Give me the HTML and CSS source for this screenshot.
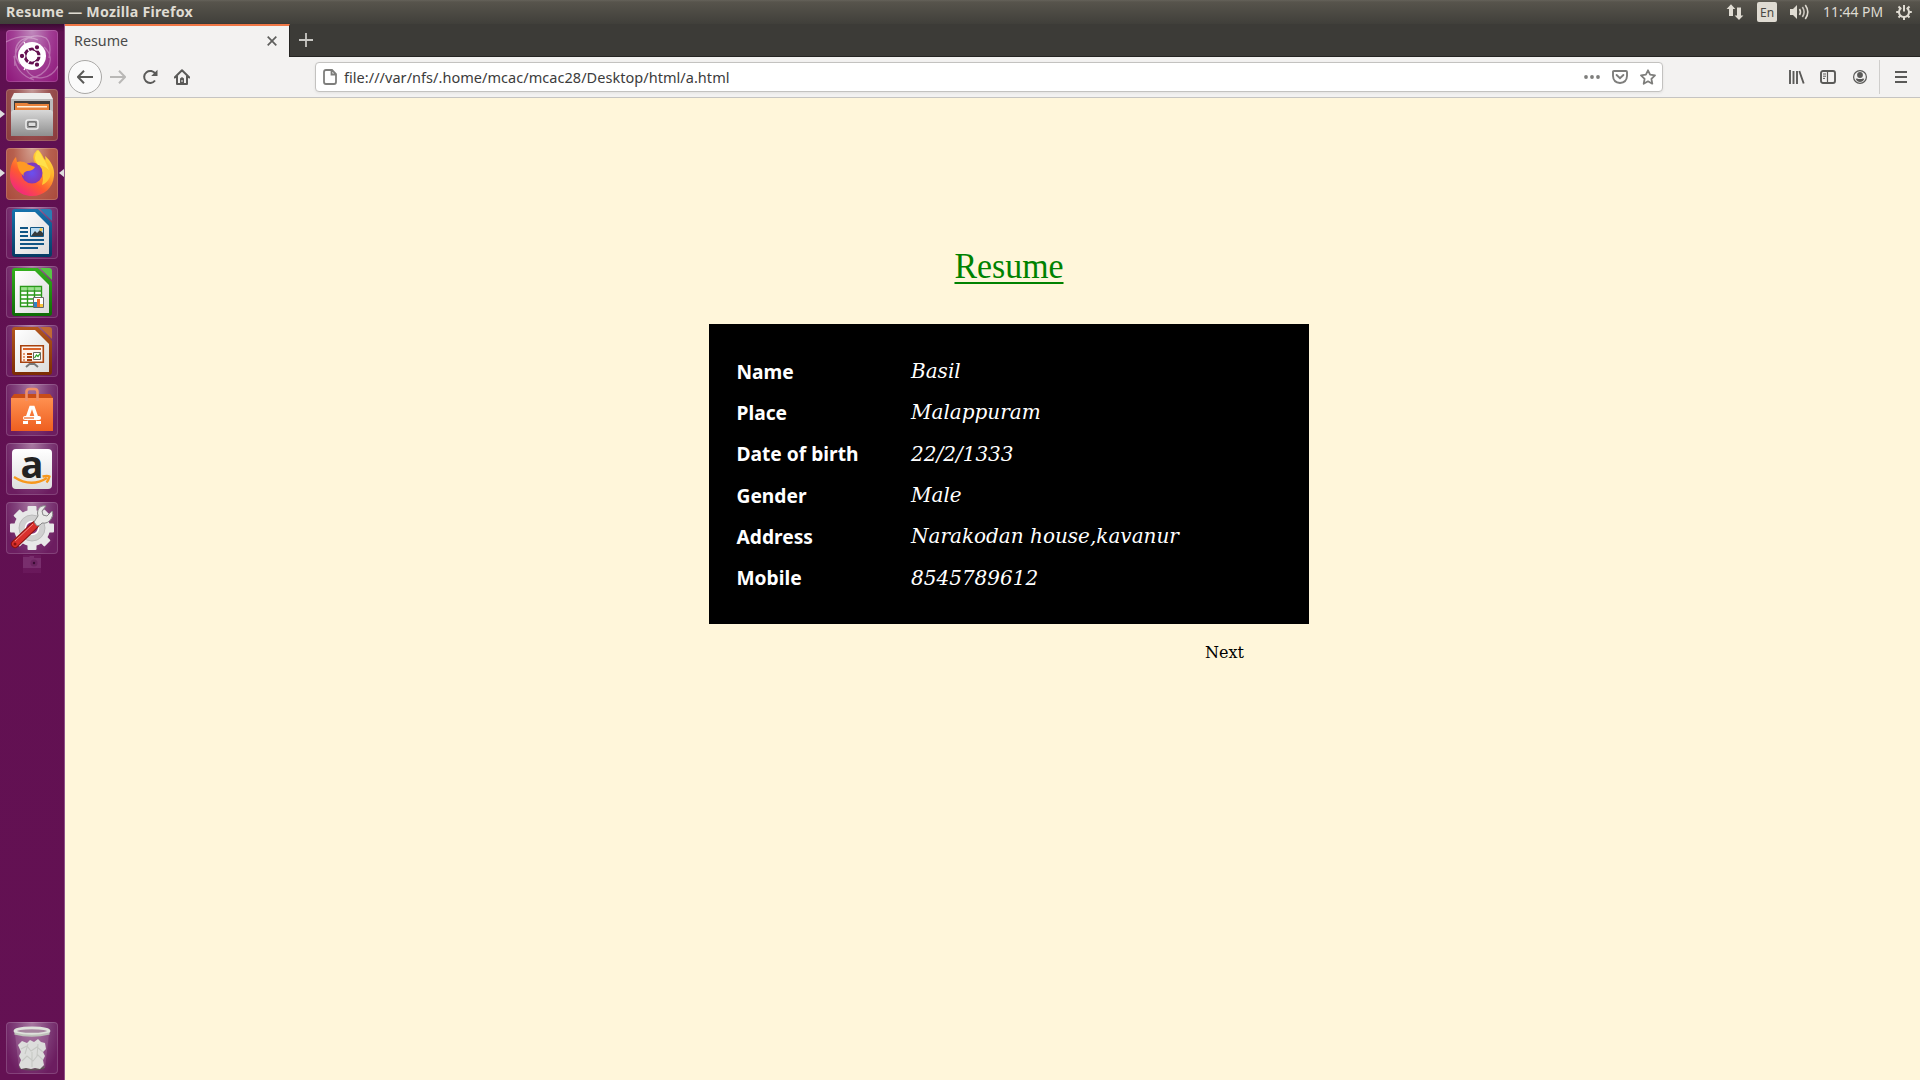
FILE: index.html
```
<!DOCTYPE html>
<html lang="en">
<head>
<meta charset="utf-8">
<title>Resume</title>
<link rel="stylesheet" href="styles.css">
</head>
<body>
<svg width="0" height="0" class="defs" aria-hidden="true">
  <defs>
    <linearGradient id="orange" x1="0" y1="0" x2="0" y2="1"><stop offset="0" stop-color="#ff9050"/><stop offset="1" stop-color="#ee5f20"/></linearGradient>
    <linearGradient id="metal" x1="0" y1="0" x2="0" y2="1"><stop offset="0" stop-color="#d8d8d8"/><stop offset="1" stop-color="#8f8f8f"/></linearGradient>
    <linearGradient id="paper" x1="0" y1="0" x2="1" y2="1"><stop offset="0" stop-color="#ffffff"/><stop offset="1" stop-color="#dcdcdc"/></linearGradient>
    <linearGradient id="fox" x1=".9" y1="0" x2=".2" y2="1"><stop offset="0" stop-color="#fff04a"/><stop offset=".35" stop-color="#ffb02a"/><stop offset=".65" stop-color="#ff5a30"/><stop offset="1" stop-color="#f0208a"/></linearGradient>
    <radialGradient id="globe"><stop offset="0" stop-color="#6a50f0"/><stop offset="1" stop-color="#8038b8"/></radialGradient>
    <linearGradient id="writer" x1="0" y1="0" x2="0" y2="1"><stop offset="0" stop-color="#1673ae"/><stop offset="1" stop-color="#063a63"/></linearGradient>
    <linearGradient id="calc" x1="0" y1="0" x2="0" y2="1"><stop offset="0" stop-color="#35b01e"/><stop offset="1" stop-color="#0e6a06"/></linearGradient>
    <linearGradient id="impress" x1="0" y1="0" x2="0" y2="1"><stop offset="0" stop-color="#b3561d"/><stop offset="1" stop-color="#7b2c04"/></linearGradient>
  </defs>
</svg>

<header class="panel">
  <span class="panel-title">Resume — Mozilla Firefox</span>
  <div class="indicators">
    <svg width="18" height="18" viewBox="0 0 18 18"><path fill="#dfdbd2" d="M5 1.3 9.3 6H7v7H3V6H.6zM13 17 8.6 12.4H11v-8h4v8h2.4z"/></svg>
    <span class="lang">En</span>
    <svg class="sound" width="20" height="18" viewBox="0 0 20 18"><path fill="#dfdbd2" d="M0 6h3l4-4v14l-4-4H0z"/><g fill="none" stroke="#dfdbd2" stroke-width="1.6"><path d="M9.5 6q2 3 0 6"/><path d="M12.4 4q3.4 5 0 10" opacity=".85"/><path d="M15.3 2q5 7 0 14"/></g></svg>
    <span class="clock">11:44 PM</span>
    <svg width="16" height="16" viewBox="0 0 16 16"><g fill="none" stroke="#dfdbd2"><path stroke-width="2" d="M5.3 3.8a5 5 0 1 0 5.4 0M8 1v6.5"/><path stroke-width="2" d="M.2 8H3m10 0h2.800M8 13v3M2.500 2.500l2 2m9-2-2 2M2.500 13.500l2-2m9 2-2-2"/></g></svg>
  </div>
</header>

<main class="desktop">
  <nav class="launcher">
    <div class="tile dash">
      <svg viewBox="0 0 52 52"><g fill="none" stroke="#fff" opacity=".3" stroke-width="1.300"><path d="M14 34C2 18 16 2 32 10M38 17c14 12 2 30-14 31M20 39C28 54 46 48 52 36M9 36C6 16 24 0 40 8q6 6 3 20M0 12Q12 5 26 7M8 26q2 18 20 24"/></g><circle cx="26" cy="26" r="14" fill="#fff"/><circle cx="26" cy="26" r="7" fill="none" stroke="#641050" stroke-width="3.200"/><g stroke="#fff" stroke-width="1.300" fill="#641050"><path d="M26 26 18 12M26 26h14M26 26 18 40"/><circle cx="16" cy="26" r="2.800"/><circle cx="31" cy="17.300" r="2.800"/><circle cx="31" cy="34.700" r="2.800"/></g><circle cx="26" cy="26" r="5.400" fill="#fff"/></svg>
    </div>
    <div class="tile brick running">
      <svg viewBox="0 0 52 52"><path fill="#ededed" d="M8 4h36l3 6v10H5V10z"/><path fill="#bbb" d="M5 10h42v37H5z"/><path fill="#403b38" d="M8 12h36v9H8z"/><path fill="#e8823a" d="M9 14h12l2 1h20v7H9z"/><path fill="#fff1dc" d="M11 17h30v1.500H11z"/><path fill="url(#metal)" d="M7 21h38l2 2v24H5V23z"/><rect x="20" y="31" width="12" height="9" rx="2" fill="#9a9a9a" stroke="#eee" stroke-width="1.500"/><rect x="22" y="33" width="8" height="4.500" rx="1" fill="#ddd" stroke="#555"/></svg>
    </div>
    <div class="tile rust running active">
      <svg viewBox="0 0 52 52"><path fill="url(#fox)" d="M31 2c5 3 5 8 8 11q1-2 0-5c6 5 10 12 9 20-1 12-10 20-22 20S4 39 4 28c0-9 2-15 6-19l1 5q3-1 7 0l6 3q0 3-5 4l-2 3c2 9 14 10 18 1q0-6-5-9-6-7 1-14z"/><path fill="#ffc732" d="M32 2c4 3 5 8 8 11q6 7 4 16-3 6-8 8 3-10-2-16-8-9-2-19z"/><circle cx="26" cy="25" r="10.500" fill="url(#globe)"/><path fill="#ff9a24" d="M11 14q6-1 10 2l8 3q-2 4-8 4-5 2-3 5-6-4-7-14z"/><path fill="#ffe04a" d="M32 2c3 3 4 8 7 11l4 9q-5-5-11-5-6-7 0-15z"/></svg>
    </div>
    <div class="tile">
      <svg viewBox="0 0 52 52"><path fill="url(#writer)" d="M9 2h23l14 14v31q0 3-3 3H9q-3 0-3-3V5q0-3 3-3z"/><path fill="url(#paper)" d="M9 5h20l14 14v28H9z"/><path fill="#2c7db2" d="M34 2h9q3 0 3 3v9z"/><path stroke="#115685" stroke-width="2.200" d="M14 21h8M14 25h8M14 29h8M14 33h24M14 37h24M14 41h18"/><path fill="#b9dcf2" stroke="#115685" d="M24.500 20.500h13v9h-13z"/><path fill="#363b3d" d="m25 29 4-5 2 2 3-3 3 3v3z"/><circle cx="35" cy="22.500" r="1.500" fill="#f6c744"/></svg>
    </div>
    <div class="tile">
      <svg viewBox="0 0 52 52"><path fill="url(#calc)" d="M9 2h23l14 14v31q0 3-3 3H9q-3 0-3-3V5q0-3 3-3z"/><path fill="url(#paper)" d="M9 5h20l14 14v28H9z"/><path fill="#58c546" d="M34 2h9q3 0 3 3v9z"/><path fill="#fff" stroke="#2a981a" stroke-width="1.400" d="M14.500 20.500h21v20h-21zM14 25h22M14 29h22M14 33h22M14 37h22M21.500 20v21M28.500 20v21"/><path fill="#72d35f" opacity=".7" d="M15 21h20v3H15z"/><path fill="#fff" stroke="#666" d="M27.500 31.500h10v10h-10z"/><path fill="#2e83c8" d="M28 36h3v5h-3z"/><path fill="#ef6a27" d="M31 33h3v8h-3z"/><path fill="#f8c53c" d="M34 38h3v3h-3z"/></svg>
    </div>
    <div class="tile">
      <svg viewBox="0 0 52 52"><path fill="url(#impress)" d="M9 2h23l14 14v31q0 3-3 3H9q-3 0-3-3V5q0-3 3-3z"/><path fill="url(#paper)" d="M9 5h20l14 14v28H9z"/><path fill="#c06a34" d="M34 2h9q3 0 3 3v9z"/><path stroke="#777" stroke-width="2" d="m26 37-6 5M26 37l6 5M26 36v4"/><path fill="#fdf4ee" stroke="#a8420f" stroke-width="1.600" d="M14.800 20.800h22.500v16.500H14.800z"/><path fill="#d9632a" d="M17 23h18v2H17z"/><path stroke="#a8420f" stroke-width="2" d="M21 29h5M21 32h5M21 35h5"/><path stroke="#e49a70" stroke-width="2" d="M17 29h2M17 32h2M17 35h2"/><path fill="#fff" stroke="#666" d="M27.500 27.500h7v7h-7z"/><path fill="none" stroke="#2fa02a" stroke-width="1.300" d="m28.500 33 2-3 1.500 1.500 2-3"/></svg>
    </div>
    <div class="tile">
      <svg viewBox="0 0 52 52"><path fill="#c84c18" d="m5 14 3-4h36l3 4v4H5z"/><path fill="url(#orange)" d="M5 14h42v33H5z"/><path fill="none" stroke="#f09068" stroke-width="2.600" d="M20.500 17V8q0-3 3-3h5q3 0 3 3v9"/><path fill="none" stroke="#fff" stroke-width="3.400" d="m20.500 36 4.300-12.500h2.400L31.500 36"/><path stroke="#fff" stroke-width="4" stroke-linecap="round" d="M19 34h14"/><path stroke="#f07030" stroke-width="1.300" d="M18 34h10"/><path stroke="#fff" stroke-width="3" d="M17 38.500h5M30 38.500h5"/></svg>
    </div>
    <div class="tile amazon">
      <span class="amazon-a">a</span>
      <svg viewBox="0 0 52 52"><path fill="none" stroke="#f7981d" stroke-width="2.300" d="M8 34q17 11 33 1M36.500 33.500q5-1 7 0-1 4-3 6"/></svg>
    </div>
    <div class="tile">
      <svg viewBox="0 0 52 52"><g transform="translate(26 26)"><g fill="#e8e8e8"><rect x="-4.500" y="-22" width="9" height="44" rx="1"/><rect x="-4.500" y="-22" width="9" height="44" rx="1" transform="rotate(45)"/><rect x="-4.500" y="-22" width="9" height="44" rx="1" transform="rotate(90)"/><rect x="-4.500" y="-22" width="9" height="44" rx="1" transform="rotate(135)"/><circle r="18"/></g><circle r="13" fill="#d0d0d0" stroke="#bbb"/><circle r="6.500" fill="#8b3a80" stroke="#fff" stroke-width="1.500"/></g><path stroke="#8a1210" stroke-width="8" stroke-linecap="round" d="M9 42 29 23"/><path stroke="#d9302c" stroke-width="6" stroke-linecap="round" d="M9 42 29 23"/><path stroke="#f18b86" d="M9 39 27 22"/><path fill="#e9e9e7" stroke="#888" d="m28 20 3 4 3-1 2-2q6 1 9-4 3-4 1-8l-5 5-4-1-1-4 4-5q-6-1-8 4-1 3 0 6z"/><circle cx="9" cy="42" r="1.500" fill="#8a1210"/></svg>
    </div>
    <div class="ghost"><svg width="18" height="12" viewBox="0 0 18 12"><path fill="#8b4a82" d="M0 1h6l1-1h4v2h7v10H0z" opacity=".45"/><circle cx="11" cy="7" r="3.500" fill="#6b2460"/><circle cx="11" cy="7" r="1.200" fill="#3a0d34"/></svg></div>
    <div class="tile trash">
      <svg viewBox="0 0 52 52"><path fill="#b88ab4" opacity=".3" d="m9 12 4 34h26l4-34z"/><path fill="#59614f" opacity=".7" d="M13 44q13 5 26 0l-1 3q-12 3-24 0z"/><path fill="#dcdddb" d="m12 23 4-4 5 2 3-3 4 2 4-3 3 3 4 1 1 6-3 3 2 4-2 4 1 5-4 4-5-1-4 1-5-1-5 1-2-4 2-5-2-4 2-4z"/><path fill="none" stroke="#c6c8c4" stroke-width="1.100" d="m15 27 6-3 4 5 6-4 6 5M16 39l5-5 6 5 5-6 5 5M22 22l-3 10M32 22l-1 12M26 30v15"/><ellipse cx="26" cy="9" rx="17" ry="3.200" fill="#a6869f" stroke="#dfe2dc" stroke-width="2.800"/><path fill="none" stroke="#bfc3bb" stroke-width="2" d="M8.500 11.500q17 4.500 35 0"/></svg>
    </div>
  </nav>

  <section class="browser">
    <div class="tabs">
      <div class="tab"><span>Resume</span><svg width="10" height="10" viewBox="0 0 10 10"><path d="m.7.7 8.600 8.600M9.300.7.7 9.300" stroke="#5f5f5d" stroke-width="1.700"/></svg></div>
      <svg class="plus" width="14" height="14" viewBox="0 0 14 14"><path d="M7 0v14M0 7h14" stroke="#c9c8c4" stroke-width="1.800"/></svg>
    </div>
    <div class="toolbar">
      <div class="back"><svg width="16" height="14" viewBox="0 0 16 14"><path d="M7 .8.9 7l6.100 6.200M1.200 7H16" fill="none" stroke="#5a5a58" stroke-width="2"/></svg></div>
      <svg class="fwd" width="16" height="14" viewBox="0 0 16 14"><path d="M9 .8 15.100 7 9 13.200M14.800 7H0" fill="none" stroke="#b9b8b6" stroke-width="2"/></svg>
      <svg class="reload" width="16" height="16" viewBox="0 0 16 16"><path d="M13.400 5A6 6 0 1 0 13 11.500" fill="none" stroke="#5a5a58" stroke-width="2"/><path fill="#5a5a58" d="M15.500.8V7H9.200z"/></svg>
      <svg class="home" width="16" height="16" viewBox="0 0 16 16"><path d="M.7 8.500 8 1.300l7.300 7.200M3 7v8h10V7" fill="none" stroke="#5a5a58" stroke-width="2" stroke-linejoin="round" stroke-linecap="round"/><path fill="#5a5a58" d="M6 9.500 8 8l2 1.500V15H6z"/><path stroke="#f3f2f1" d="M8 11v2"/></svg>
      <div class="urlbar">
        <svg width="14" height="16" viewBox="0 0 14 16"><path d="M3 1h6l4 4v8q0 2-2 2H3q-2 0-2-2V3q0-2 2-2zM8.500 1v4.500H13" fill="none" stroke="#7e7e7c" stroke-width="1.800"/></svg>
        <span class="url">file:///var/nfs/.home/mcac/mcac28/Desktop/html/a.html</span>
        <svg width="16" height="4" viewBox="0 0 16 4"><g fill="#7e7e7c"><circle cx="2" cy="2" r="1.900"/><circle cx="8" cy="2" r="1.900"/><circle cx="14" cy="2" r="1.900"/></g></svg>
        <svg class="pocket" width="16" height="14" viewBox="0 0 16 14"><path d="M2 1h12q1 0 1 1v4q-.3 6.500-7 7-6.700-.5-7-7V2q0-1 1-1z" fill="none" stroke="#7e7e7c" stroke-width="1.900"/><path d="M4.600 5 8 8.300 11.400 5" fill="none" stroke="#7e7e7c" stroke-width="1.900" stroke-linecap="round"/></svg>
        <svg class="star" width="16" height="16" viewBox="0 0 16 16"><path d="m8 1.300 2.100 4.400 4.900.7-3.600 3.400.9 4.900L8 12.300l-4.300 2.400.9-4.900L1 6.400l4.900-.7z" fill="none" stroke="#7e7e7c" stroke-width="1.800" stroke-linejoin="round"/></svg>
      </div>
      <svg class="library" width="16" height="14" viewBox="0 0 16 14"><path d="M1 0v14M4.500 1v13M8 1v13M10.300 1l4.400 12.500" stroke="#5a5a58" stroke-width="1.900"/></svg>
      <svg class="sidebar" width="16" height="14" viewBox="0 0 16 14"><rect x="1" y="1" width="14" height="12" rx="2" fill="none" stroke="#5a5a58" stroke-width="1.900"/><path d="M7.500 1v12" stroke="#5a5a58" stroke-width="1.200"/><path d="M3 4h3M3 6.200h3M3 8.400h2" stroke="#5a5a58"/></svg>
      <svg class="account" width="14" height="14" viewBox="0 0 14 14"><circle cx="7" cy="7" r="6.400" fill="none" stroke="#5a5a58" stroke-width="1.200"/><circle cx="7" cy="5" r="2.900" fill="#5a5a58"/><path fill="#5a5a58" d="M2.700 8.800q2-.4 2.500.1h3.600q.5-.5 2.500-.1Q10 12 7 12T2.700 8.800z"/></svg>
      <div class="menu"><svg width="12" height="12" viewBox="0 0 12 12"><path d="M0 1h12M0 6h12M0 11h12" stroke="#5a5a58" stroke-width="1.900"/></svg></div>
    </div>

    <article class="page">
      <div class="resume">
        <h1 class="heading"><span>Resume</span></h1>
        <dl class="card">
          <dt>Name</dt><dd>Basil</dd>
          <dt>Place</dt><dd>Malappuram</dd>
          <dt>Date of birth</dt><dd>22/2/1333</dd>
          <dt>Gender</dt><dd>Male</dd>
          <dt>Address</dt><dd>Narakodan house,kavanur</dd>
          <dt>Mobile</dt><dd>8545789612</dd>
        </dl>
        <div class="next">Next</div>
      </div>
    </article>
  </section>
</main>
</body>
</html>
```
FILE: styles.css
```
* { box-sizing: border-box; }
body {
  margin: 0;
  width: 1920px;
  height: 1080px;
  overflow: hidden;
  display: flex;
  flex-direction: column;
  font-family: "Noto Sans", sans-serif;
}
svg { display: block; flex: none; }
.defs { position: absolute; }

.panel {
  height: 24px;
  flex: none;
  display: flex;
  align-items: center;
  justify-content: space-between;
  padding: 0 8px 0 6px;
  background: linear-gradient(#65625a 0, #57544c 2px, #403f3a 100%);
  color: #dfdbd2;
}
.panel-title { font-size: 14.2px; font-weight: 700; line-height: 24px; letter-spacing: .26px; }
.indicators { display: flex; align-items: center; }
.lang {
  width: 20px;
  height: 20px;
  margin-left: 13px;
  border-radius: 2px;
  background: #dfdbd2;
  color: #4a4843;
  font-size: 12px;
  line-height: 21px;
  text-align: center;
}
.sound { margin-left: 13px; }
.clock { width: 60px; margin: 0 13px 0 13px; font-size: 13.9px; line-height: 24px; white-space: nowrap; }

.desktop { flex: 1; display: flex; min-height: 0; }
.launcher {
  width: 65px;
  flex: none;
  display: flex;
  flex-direction: column;
  align-items: flex-start;
  gap: 7px;
  padding: 6px 0 6px 6px;
  border-right: 1px solid #8f5085;
  background: linear-gradient(#3c0a33 0, #5f1051 8px, #641153 100%);
}
.tile {
  position: relative;
  width: 52px;
  height: 52px;
  flex: none;
  border-radius: 4px;
  background: radial-gradient(ellipse at 50% 0, #a878a1 0, #80407a 45%, #6c1d60 80%);
  box-shadow: inset 0 0 0 1px rgba(255, 255, 255, .16);
}
.tile svg { width: 52px; height: 52px; }
.dash { background: radial-gradient(ellipse at 50% 0, #c08abd 0, #a23f95 50%, #8c1377 100%); }
.brick { background: radial-gradient(ellipse at 50% 0, #c49a99 0, #98504f 50%, #8a3a3c 100%); }
.rust { background: radial-gradient(ellipse at 50% 0, #d3a08f 0, #b7604e 50%, #a9493c 100%); }
.running::before, .active::after {
  content: "";
  position: absolute;
  top: 21px;
  border: 4px solid transparent;
}
.running::before { left: -6px; border-left: 5px solid #dedede; border-right: 0; }
.active::after { right: -6px; border-right: 5px solid #dedede; border-left: 0; }
.amazon-a {
  position: absolute;
  left: 6px;
  top: 6px;
  width: 40px;
  height: 40px;
  border-radius: 4px;
  background: linear-gradient(#fff, #dedede);
  color: #222;
  font: 700 38px/28px "Open Sans", sans-serif;
  text-align: center;
}
.amazon svg { position: relative; }
.ghost {
  width: 18px;
  height: 18px;
  margin: -6px 0 0 17px;
  padding-top: 1px;
  background: rgba(140, 60, 130, .2);
}
.trash { margin-top: auto; }

.browser { flex: 1; display: flex; flex-direction: column; }
.tabs {
  height: 33px;
  display: flex;
  align-items: center;
  background: #3c3b37;
  border-bottom: 1px solid #252422;
}
.tab {
  width: 225px;
  height: 33px;
  align-self: flex-start;
  display: flex;
  align-items: center;
  justify-content: space-between;
  padding: 0 12px 2px 9px;
  background: #f3f2f1;
  border-top: 2px solid #f07746;
  border-right: 1px solid #252422;
  box-shadow: 0 -1px #3c3b37;
  color: #4a4a4a;
  font-size: 14.3px;
}
.plus { margin-left: 9px; }
.toolbar {
  height: 41px;
  display: flex;
  align-items: center;
  padding-left: 3px;
  background: #f3f2f1;
  border-bottom: 1px solid #c5c4c2;
}
.back {
  width: 34px;
  height: 34px;
  display: grid;
  place-items: center;
  border: 1px solid #a9a8a6;
  border-radius: 50%;
  background: #fafafa;
}
.fwd { margin-left: 8px; }
.reload { margin-left: 16px; }
.home { margin-left: 16px; }
.urlbar {
  width: 1348px;
  height: 30px;
  margin-left: 125px;
  padding: 0 6px 0 7px;
  display: flex;
  align-items: center;
  border: 1px solid #c3c2c0;
  border-radius: 4px;
  background: #fff;
  box-shadow: 0 1px 3px rgba(0, 0, 0, .07);
}
.url { flex: 1; padding-left: 7px; color: #3c3c3c; font-size: 14.5px; letter-spacing: .04px; white-space: nowrap; }
.pocket { margin-left: 12px; }
.star { margin-left: 12px; }
.library { margin-left: 126px; }
.sidebar { margin-left: 15px; }
.account { margin-left: 17px; }
.menu {
  height: 34px;
  margin-left: 12px;
  padding-left: 15px;
  display: flex;
  align-items: center;
  border-left: 1px solid #cfcecc;
}

.page { flex: 1; padding-left: 644px; background: #fff6da; font-family: "DejaVu Serif", serif; }
.resume { width: 600px; }
.heading {
  margin: 0;
  height: 226px;
  padding-top: 147px;
  display: flex;
  justify-content: center;
  color: #008200;
  font: 400 36px/42px "Liberation Serif", serif;
}
.heading span {
  height: 39px;
  border-bottom: 2px solid #008200;
  transform: scaleX(.94);
}
.card {
  margin: 0;
  height: 300px;
  padding: 26px 27px;
  display: grid;
  grid-template-columns: 175px 1fr;
  grid-auto-rows: 41.33px;
  background: #000;
  color: #fff;
  line-height: 41.33px;
}
.card dt { padding: .6px 0 0 .5px; font-family: "Noto Sans", sans-serif; font-size: 19.2px; font-weight: 700; }
.card dd { margin: 0; padding-top: 1px; font-size: 20px; font-style: italic; }
.next { padding: 19px 65px 0 0; color: #000; font-size: 16px; line-height: 20px; text-align: right; }
```
